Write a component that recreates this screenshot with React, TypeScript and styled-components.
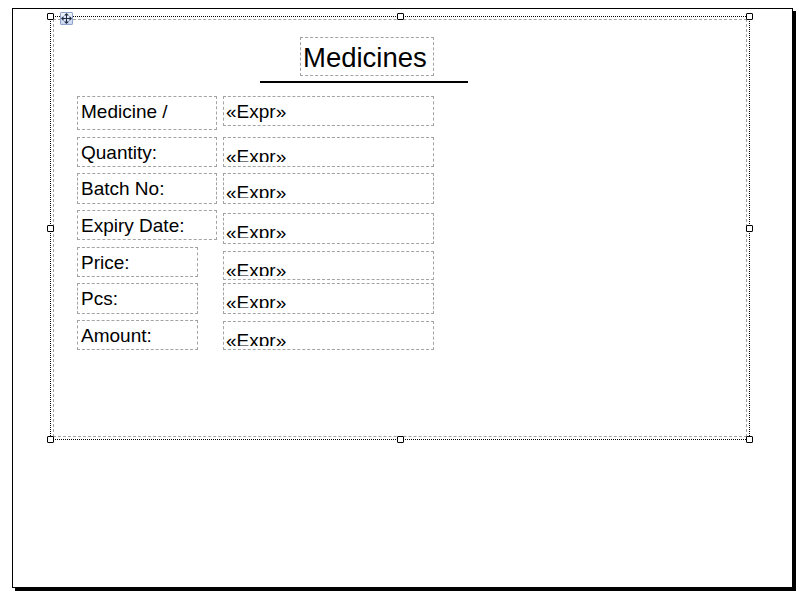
import React from "react";
import styled, { createGlobalStyle } from "styled-components";

const Global = createGlobalStyle`
  html, body { margin: 0; padding: 0; background: #ffffff; }
  body { font-family: "Liberation Sans", Arial, sans-serif; }
`;

const Workspace = styled.div`
  width: 806px;
  height: 592px;
  box-sizing: border-box;
  padding: 8px 0 0 12px;
  background: #ffffff;
`;

const Page = styled.div`
  width: 781px;
  height: 580px;
  box-sizing: border-box;
  border: 1px solid #000;
  box-shadow: 3px 3px 0 0 #000;
  background: #fff;
  padding: 7px 0 0 37px;
`;

const Section = styled.div`
  position: relative;
  width: 700px;
  height: 424px;
  box-sizing: border-box;
  border: 1px dotted #000;
  padding: 2px;
  display: flex;
`;

const SectionBody = styled.div`
  flex: 1;
  border: 1px dashed #a3a3a3;
  display: flex;
  flex-direction: column;
  padding: 17px 0 0 23px;
`;

const Handle = styled.div<{ $x: "l" | "c" | "r"; $y: "t" | "m" | "b" }>`
  position: absolute;
  width: 7px;
  height: 7px;
  box-sizing: border-box;
  border: 1px solid #000;
  border-radius: 1px;
  background: #fff;
  z-index: 3;
  ${(p) => (p.$x === "l" ? "left: -4px;" : p.$x === "r" ? "right: -4px;" : "left: calc(50% - 3px);")}
  ${(p) => (p.$y === "t" ? "top: -4px;" : p.$y === "b" ? "bottom: -4px;" : "top: calc(50% - 3px);")}
`;

const MoveGrip = styled.div`
  position: absolute;
  left: 9px;
  top: -5px;
  width: 13px;
  height: 13px;
  box-sizing: border-box;
  border: 1px solid #8ea4c8;
  border-radius: 1px;
  background: linear-gradient(#eef3fb, #c9d7ee);
  display: flex;
  align-items: center;
  justify-content: center;
  z-index: 4;
`;

const Header = styled.div`
  width: 208px;
  margin-left: 183px;
  display: flex;
  flex-direction: column;
  align-items: flex-start;
  gap: 5px;
`;

const Control = styled.div`
  box-sizing: border-box;
  border: 1px dashed #a3a3a3;
  color: #000;
  font-family: "Liberation Sans", Arial, sans-serif;
  white-space: nowrap;
  overflow: hidden;
`;

const TitleBox = styled(Control)`
  margin-left: 40px;
  width: 134px;
  height: 39px;
  font-size: 27.5px;
  line-height: 31px;
  padding: 4px 0 0 2px;
`;

const Rule = styled.div`
  align-self: stretch;
  height: 2px;
  background: #000;
`;

const Rows = styled.div`
  display: flex;
  flex-direction: column;
  gap: 6px;
  margin-top: 13px;
`;

const Row = styled.div<{ $h: number }>`
  display: grid;
  grid-template-columns: 146px 211px;
  align-items: start;
  height: ${(p) => p.$h}px;
`;

const LabelBox = styled(Control)<{ $w: number; $h: number }>`
  width: ${(p) => p.$w}px;
  height: ${(p) => p.$h}px;
  font-size: 19px;
  line-height: 22px;
  padding: 4px 0 0 3px;
`;

const FieldBox = styled(Control)<{ $h: number; $dy: number; $low?: boolean }>`
  height: ${(p) => p.$h}px;
  margin-top: ${(p) => p.$dy}px;
  font-size: 19px;
  line-height: 22px;
  padding: ${(p) => (p.$low ? "8px" : "4px")} 0 0 2px;
`;

const Clip = styled.span<{ $low?: boolean }>`
  display: block;
  height: ${(p) => (p.$low ? "16px" : "22px")};
  overflow: hidden;
`;

type RowData = { label: string; lw: number; lh: number; fh: number; dy: number; h: number };

const rows: RowData[] = [
  { label: "Medicine /", lw: 140, lh: 34, fh: 30, dy: 0, h: 35 },
  { label: "Quantity:", lw: 140, lh: 30, fh: 30, dy: 0, h: 30 },
  { label: "Batch No:", lw: 140, lh: 31, fh: 31, dy: 0, h: 31 },
  { label: "Expiry Date:", lw: 140, lh: 30, fh: 31, dy: 3, h: 31 },
  { label: "Price:", lw: 121, lh: 30, fh: 29, dy: 4, h: 30 },
  { label: "Pcs:", lw: 121, lh: 31, fh: 31, dy: 0, h: 31 },
  { label: "Amount:", lw: 121, lh: 30, fh: 29, dy: 1, h: 30 },
];

const MoveIcon = () => (
  <svg width="11" height="11" viewBox="0 0 11 11">
    <g fill="#1f2b45">
      <rect x="5" y="2" width="1" height="7" />
      <rect x="2" y="5" width="7" height="1" />
      <polygon points="5.5,0 3,2.5 8,2.5" />
      <polygon points="5.5,11 3,8.5 8,8.5" />
      <polygon points="0,5.5 2.5,3 2.5,8" />
      <polygon points="11,5.5 8.5,3 8.5,8" />
    </g>
  </svg>
);

const handles: Array<["l" | "c" | "r", "t" | "m" | "b"]> = [
  ["l", "t"], ["c", "t"], ["r", "t"],
  ["l", "m"], ["r", "m"],
  ["l", "b"], ["c", "b"], ["r", "b"],
];

export default function App() {
  return (
    <>
      <Global />
      <Workspace>
        <Page>
          <Section>
            {handles.map(([x, y]) => (
              <Handle key={x + y} $x={x} $y={y} />
            ))}
            <MoveGrip>
              <MoveIcon />
            </MoveGrip>
            <SectionBody>
              <Header>
                <TitleBox>Medicines</TitleBox>
                <Rule />
              </Header>
              <Rows>
                {rows.map((r, i) => (
                  <Row key={r.label} $h={r.h}>
                    <LabelBox $w={r.lw} $h={r.lh}>{r.label}</LabelBox>
                    <FieldBox $h={r.fh} $dy={r.dy} $low={i > 0}>
                      <Clip $low={i > 0}>«Expr»</Clip>
                    </FieldBox>
                  </Row>
                ))}
              </Rows>
            </SectionBody>
          </Section>
        </Page>
      </Workspace>
    </>
  );
}
